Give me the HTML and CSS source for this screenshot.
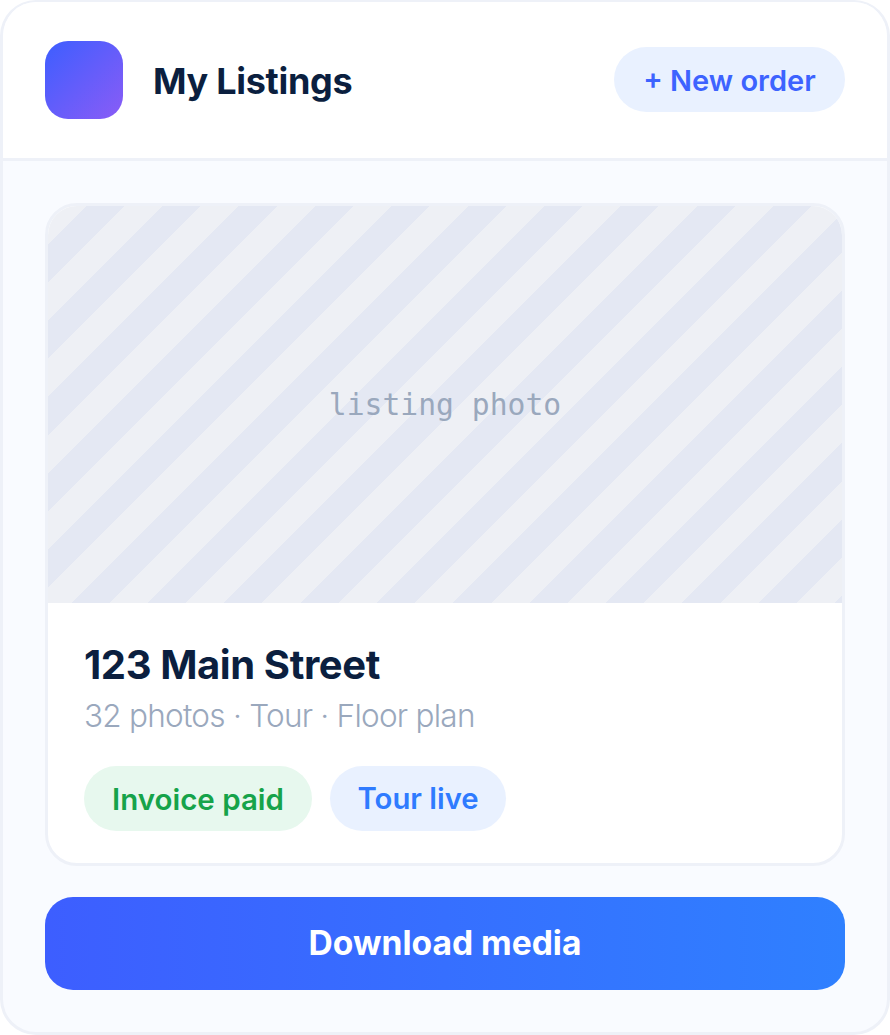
FILE: index.html
```html
<!DOCTYPE html>
<html lang="en">
<head>
  <meta charset="UTF-8">
  <title>My Listings</title>
  <link rel="stylesheet" href="styles.css">
</head>
<body>
  <div class="app">
    <div class="header">
      <div class="brand">
        <div class="logo"></div>
        <h1>My Listings</h1>
      </div>
      <a href="#" class="new-order">+ New order</a>
    </div>

    <div class="content">
      <div class="listing">
        <div class="photo">listing photo</div>
        <div class="info">
          <h2>123 Main Street</h2>
          <p>32 photos · Tour · Floor plan</p>
          <div class="tags">
            <span class="tag tag-green">Invoice paid</span>
            <span class="tag tag-blue">Tour live</span>
          </div>
        </div>
      </div>
      <a href="#" class="download">Download media</a>
    </div>
  </div>
</body>
</html>
```

FILE: styles.css
```css
* {
  box-sizing: border-box;
}
body {
  margin: 0;
  background-color: #fff;
  font-family: Inter, "Open Sans", sans-serif;
}
a {
  text-decoration: none;
}
.app {
  height: 1035px;
  border: 3px solid #eef1f8;
  border-top-width: 2px;
  border-radius: 36px;
  background-color: #f9fbff;
  overflow: hidden;
  display: flex;
  flex-direction: column;
}
.header {
  height: 159px;
  flex: none;
  padding: 0 42px;
  background-color: #fff;
  border-bottom: 3px solid #eef1f8;
  display: flex;
  align-items: center;
  justify-content: space-between;
}
.brand {
  display: flex;
  align-items: center;
  gap: 30px;
}
.logo {
  width: 78px;
  height: 78px;
  border-radius: 23px;
  background: linear-gradient(135deg, #3d5eff, #8a5cf6);
}
.header h1 {
  margin: 2px 0 0;
  font-size: 36px;
  font-weight: 700;
  letter-spacing: -0.3px;
  color: #0b1f3f;
}
.new-order {
  width: 231px;
  height: 65px;
  margin-bottom: 1px;
  padding-top: 2px;
  border-radius: 33px;
  background-color: #e9f1ff;
  color: #3d63ff;
  font-size: 29px;
  font-weight: 600;
  display: flex;
  align-items: center;
  justify-content: center;
}
.content {
  flex: 1;
  padding: 42px;
  display: flex;
  flex-direction: column;
  gap: 31px;
}
.listing {
  height: 663px;
  background-color: #fff;
  border: 3px solid #eef1f8;
  border-radius: 32px;
  overflow: hidden;
}
.photo {
  height: 397px;
  background: repeating-linear-gradient(135deg, #eef0f5 0, #eef0f5 27px, #e4e8f3 27px, #e4e8f3 54px);
  color: #9aa8bd;
  font-family: "DejaVu Sans Mono", monospace;
  font-size: 29.7px;
  display: flex;
  align-items: center;
  justify-content: center;
}
.info {
  padding: 37px 36px 32px;
}
.info h2 {
  margin: 0;
  font-size: 40px;
  line-height: 50px;
  font-weight: 700;
  letter-spacing: -0.4px;
  color: #0b1f3f;
}
.info p {
  margin: 2px 0 0;
  font-size: 31.5px;
  line-height: 48px;
  font-weight: 300;
  letter-spacing: -0.75px;
  color: #9aa8bd;
}
.tags {
  margin-top: 26px;
  display: flex;
  gap: 18px;
}
.tag {
  height: 65px;
  padding: 0 28px;
  border-radius: 33px;
  font-size: 29.5px;
  font-weight: 600;
  display: flex;
  align-items: center;
}
.tag-green {
  background-color: #e7f8ee;
  color: #16a34a;
}
.tag-blue {
  padding: 0 27.5px;
  font-size: 29.3px;
  background-color: #e9f1ff;
  color: #2f7bff;
}
.download {
  height: 93px;
  padding-bottom: 2px;
  border-radius: 28px;
  background: linear-gradient(90deg, #3d5eff, #2f80ff);
  color: #fff;
  font-size: 33.6px;
  font-weight: 700;
  display: flex;
  align-items: center;
  justify-content: center;
}
```
